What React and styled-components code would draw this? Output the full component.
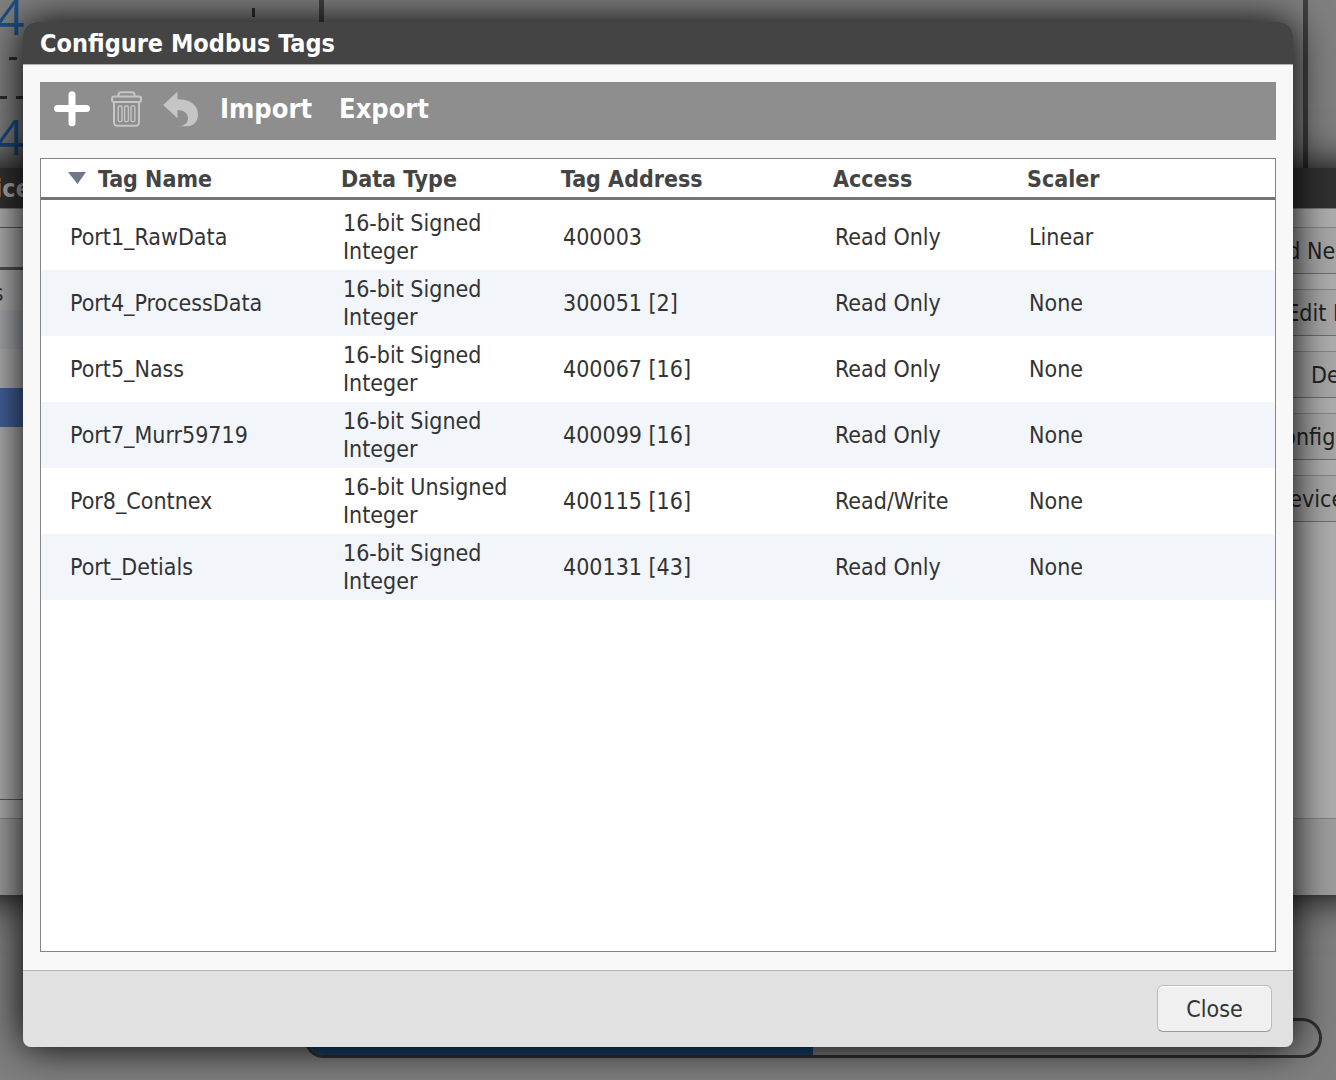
import React from "react";
import styled, { createGlobalStyle } from "styled-components";

const font = `"DejaVu Sans Condensed", "DejaVu Sans", sans-serif`;

const GlobalStyle = createGlobalStyle`
  *, *::before, *::after { box-sizing: border-box; }
  body { margin: 0; background: #7f7f7f; color: #333; font-family: ${font}; font-size: 23px; line-height: 28px; }
  button { font: inherit; color: inherit; border: 0; padding: 0; background: none; cursor: pointer; }
`;

const Screen = styled.div`
  position: relative;
  min-height: 100vh;
  overflow: hidden;
  display: flex;
`;

/* Operator screen behind the windows: a free canvas */
const Canvas = styled.div`
  position: absolute;
  inset: 0;
  overflow: hidden;
`;
const Reading = styled.span`
  position: absolute;
  left: -4px;
  top: ${(p) => p.$top}px;
  font-family: "Open Sans", sans-serif;
  font-weight: 400;
  font-size: 50px;
  line-height: 60px;
  color: #1b4f87;
`;
const Tick = styled.i`
  position: absolute;
  left: ${(p) => p.$x}px;
  top: ${(p) => p.$y}px;
  width: ${(p) => (p.$tall ? 3 : 8)}px;
  height: ${(p) => (p.$tall ? 9 : 3)}px;
  background: #2b2b2b;
`;
const Plot = styled.div`
  position: absolute;
  left: 319px;
  right: 28px;
  top: -10px;
  height: 500px;
  border: 5px solid #404040;
`;
const Level = styled.div`
  position: absolute;
  left: 304px;
  right: 14px;
  top: 1018px;
  height: 40px;
  border: 3px solid #303030;
  border-radius: 20px;
  overflow: hidden;
`;
const LevelFill = styled.div`
  width: 50%;
  height: 100%;
  background: #18426f;
`;

const BackWindow = styled.section`
  position: absolute;
  left: -150px;
  right: -157px;
  top: 168px;
  height: 727px;
  display: flex;
  flex-direction: column;
  background: #adadad;
  box-shadow: 0 0 40px #000;
`;
const BackTitle = styled.h2`
  margin: 0;
  height: 41px;
  flex: none;
  padding: 7px 96px;
  font-size: 25px;
  line-height: 28px;
  color: #a8a8a8;
  background: #303030;
  border-bottom: 1px solid #777;
`;
const BackBody = styled.div`
  flex: 1;
  display: flex;
  gap: 18px;
  padding: 18px;
`;
const DeviceList = styled.div`
  flex: 1;
  border: 1px solid #555;
`;
const DeviceHead = styled.div`
  height: 42px;
  margin-bottom: 1px;
  border-bottom: 3px solid #4d5051;
`;
const DeviceRow = styled.div`
  height: 39px;
  padding: 8px 53px;
  background: ${(p) => p.$bg || "transparent"};
`;
const BackActions = styled.div`
  width: 260px;
  display: flex;
  flex-direction: column;
  gap: 15px;
`;
const BackButton = styled.button`
  height: 47px;
  color: #222;
  background: #a6a6a6;
  border: 1px solid #858585;
  border-bottom-color: #6c6c6c;
  border-radius: 6px;
`;
const BackFooter = styled.div`
  height: 77px;
  flex: none;
  background: #9d9d9d;
  border-top: 1px solid #828282;
`;

const DialogLayer = styled.div`
  position: relative;
  flex: 1;
  display: flex;
  padding: 22px 43px 33px 23px;
`;
const Dialog = styled.section`
  flex: 1;
  display: flex;
  flex-direction: column;
  overflow: hidden;
  border-radius: 14px 14px 8px 8px;
  box-shadow: 0 0 40px #000;
`;
const DialogTitle = styled.h1`
  margin: 0;
  padding: 8px 17px 6px;
  font-size: 25px;
  line-height: 28px;
  color: #fff;
  background: #444;
  border-bottom: 1px solid #b0b0b0;
`;
const DialogBody = styled.div`
  flex: 1;
  display: flex;
  flex-direction: column;
  gap: 18px;
  padding: 17px 17px 18px;
  background: #f8f8f8;
`;
const Toolbar = styled.div`
  height: 58px;
  display: flex;
  align-items: center;
  gap: 21px;
  padding: 0 14px 4px;
  background: #8e8e8e;
`;
const ToolButton = styled.button`
  display: flex;
  color: ${(p) => (p.disabled ? "#c5c5c5" : "#fff")};
`;
const ToolText = styled.button`
  padding-right: 6px;
  font-size: 27px;
  line-height: 32px;
  font-weight: 700;
  color: #fff;
`;
const TableFrame = styled.div`
  flex: 1;
  background: #fff;
  border: 1px solid #858585;
`;
const Table = styled.table`
  width: 100%;
  table-layout: fixed;
  border-collapse: separate;
  border-spacing: 0;
`;
const Col = styled.col`
  width: ${(p) => p.$w};
`;
const Th = styled.th`
  height: 41px;
  padding: 1px 0 0 27px;
  text-align: left;
  color: #444;
  border-bottom: 3px solid #6f7678;
`;
const SortButton = styled.button`
  display: flex;
  align-items: center;
  gap: 12px;
  font-weight: 700;
`;
const Row = styled.tr`
  &:nth-child(even) { background: #f2f6fb; }
  &:first-child td { padding-top: 9px; }
`;
const Td = styled.td`
  padding: 5px 0 5px 29px;
`;
const DialogFooter = styled.footer`
  display: flex;
  justify-content: flex-end;
  padding: 14px 21px 15px;
  background: #e1e1e1;
  border-top: 1px solid #b4b4b4;
`;
const CloseButton = styled.button`
  width: 115px;
  height: 47px;
  background: #f0f0f0;
  border: 1px solid #bbb;
  border-bottom-color: #999;
  border-radius: 6px;
  box-shadow: inset 0 1px #fff;
`;

const PlusIcon = () => (
  <svg width="36" height="36" viewBox="0 0 36 36" stroke="currentColor" strokeWidth="7" strokeLinecap="round" aria-hidden="true">
    <path d="M18 3.800v27.900M3.500 17.500h29" />
  </svg>
);
const TrashIcon = () => (
  <svg width="31" height="36" viewBox="0 0 31 36" fill="none" stroke="currentColor" strokeWidth="2" aria-hidden="true">
    <path d="M7.500 5.500V4q0-2.700 2.700-2.700h10.600q2.700 0 2.700 2.700v1.500" />
    <rect x="1" y="5.600" width="29" height="5.400" rx="2" />
    <path d="M3 11v20.200q0 3.600 3.600 3.600h17.800q3.600 0 3.600-3.600V11" />
    <g strokeWidth="1.400">
      <rect x="7.200" y="15" width="3.800" height="15.600" rx="1.400" />
      <rect x="13.600" y="15" width="3.800" height="15.600" rx="1.400" />
      <rect x="20" y="15" width="3.800" height="15.600" rx="1.400" />
    </g>
  </svg>
);
const UndoIcon = () => (
  <svg width="36" height="36" viewBox="0 0 36 36" fill="currentColor" aria-hidden="true">
    <path d="M.2 14 14.500.5v7.800C27 8.300 35 14 35 23.500 35 31 30 35.200 24 35.200h-8C21.500 34.800 25 32 25 27.500 25 22 20.500 19 14.500 19v8.200z" />
  </svg>
);
const SortIcon = () => (
  <svg width="18" height="16" viewBox="0 0 18 16" aria-hidden="true">
    <path d="M0 1h18L9.500 13z" fill="#6e7888" />
  </svg>
);

const rows = [
  ["Port1_RawData", "16-bit Signed Integer", "400003", "Read Only", "Linear"],
  ["Port4_ProcessData", "16-bit Signed Integer", "300051 [2]", "Read Only", "None"],
  ["Port5_Nass", "16-bit Signed Integer", "400067 [16]", "Read Only", "None"],
  ["Port7_Murr59719", "16-bit Signed Integer", "400099 [16]", "Read Only", "None"],
  ["Por8_Contnex", "16-bit Unsigned Integer", "400115 [16]", "Read/Write", "None"],
  ["Port_Detials", "16-bit Signed Integer", "400131 [43]", "Read Only", "None"],
];

export default function App() {
  return (
    <Screen>
      <GlobalStyle />
      <Canvas>
        <Reading $top={-14}>4</Reading>
        <Reading $top={106}>4</Reading>
        <Tick $x={9} $y={57} />
        <Tick $x={-1} $y={96} />
        <Tick $x={16} $y={96} />
        <Tick $x={252} $y={8} $tall />
        <Plot />
        <Level><LevelFill /></Level>
      </Canvas>
      <BackWindow>
        <BackTitle>Device</BackTitle>
        <BackBody>
          <DeviceList>
            <DeviceHead />
            <DeviceRow>Devices</DeviceRow>
            <DeviceRow $bg="#a4a6ab" />
            <DeviceRow />
            <DeviceRow $bg="#41619a" />
          </DeviceList>
          <BackActions>
            <BackButton>Add New Device</BackButton>
            <BackButton>Edit Device</BackButton>
            <BackButton>Delete</BackButton>
            <BackButton>Configure Tags</BackButton>
            <BackButton>Device Status</BackButton>
          </BackActions>
        </BackBody>
        <BackFooter />
      </BackWindow>
      <DialogLayer>
        <Dialog role="dialog" aria-labelledby="dialog-title">
          <DialogTitle id="dialog-title">Configure Modbus Tags</DialogTitle>
          <DialogBody>
            <Toolbar>
              <ToolButton aria-label="Add tag"><PlusIcon /></ToolButton>
              <ToolButton aria-label="Delete tag" disabled><TrashIcon /></ToolButton>
              <ToolButton aria-label="Undo" disabled><UndoIcon /></ToolButton>
              <ToolText>Import</ToolText>
              <ToolText>Export</ToolText>
            </Toolbar>
            <TableFrame>
              <Table>
                <colgroup>
                  <Col $w="273px" />
                  <Col $w="220px" />
                  <Col $w="272px" />
                  <Col $w="194px" />
                  <Col $w="auto" />
                </colgroup>
                <thead>
                  <tr>
                    <Th><SortButton><SortIcon />Tag Name</SortButton></Th>
                    <Th>Data Type</Th>
                    <Th>Tag Address</Th>
                    <Th>Access</Th>
                    <Th>Scaler</Th>
                  </tr>
                </thead>
                <tbody>
                  {rows.map((r) => (
                    <Row key={r[0]}>
                      {r.map((c, i) => <Td key={i}>{c}</Td>)}
                    </Row>
                  ))}
                </tbody>
              </Table>
            </TableFrame>
          </DialogBody>
          <DialogFooter>
            <CloseButton>Close</CloseButton>
          </DialogFooter>
        </Dialog>
      </DialogLayer>
    </Screen>
  );
}
